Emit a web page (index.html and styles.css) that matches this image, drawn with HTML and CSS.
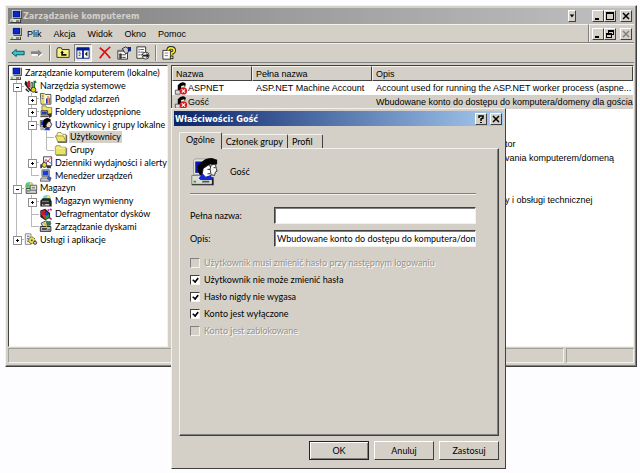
FILE: index.html
```html
<!DOCTYPE html>
<html lang="pl">
<head>
<meta charset="utf-8">
<title>Zarządzanie komputerem</title>
<link rel="stylesheet" href="styles.css">
</head>
<body>
<svg class="sprite" aria-hidden="true">
  <symbol id="pc" viewBox="0 0 16 16"><path d="M3 0h11l1 1v9H3z" fill="#d4d0c8"/><path d="M3 0h11v1H4v9H3z" fill="#eee"/><path d="M4 1h9v8H4z" fill="#001878"/><path d="M5 2h7v6H5z" fill="#0828c8"/><path d="M14 1h1v10H5v-1h9z" fill="#222"/><path d="M1 11h12v4H1z" fill="#deded8"/><path d="M1 15h13v1H1zM13 12h1v4h-1zM8 13h4v1H8z" fill="#222"/><path d="M2 13h2v1H2z" fill="#0a0"/></symbol>
  <symbol id="tools" viewBox="0 0 16 16"><path d="M1 1l3 2v4l5 6-2 1-5-6-2-3z" fill="#222"/><path d="M4 1h3v8H4z" fill="#d02020"/><path d="M8 3h2v7H8z" fill="#eee" stroke="#333"/><path d="M11 1h3l1 2-2 1v6h-2z" fill="#168030"/><circle cx="11" cy="12" r="3" fill="#e0d020" stroke="#222"/><path d="M2 10l4 4-1 1-4-3zM13 14h3v2h-3z" fill="#222"/></symbol>
  <symbol id="log" viewBox="0 0 16 16"><path d="M1 2h5l1 1h7v12H2z" fill="#fff8d0" stroke="#333"/><path d="M2 3l4-1v12l-4-1z" fill="#e8d860"/><path d="M8 8h2v6H8z" fill="#2038c0"/><path d="M10 5h1v9h-1z" fill="#c02020"/><path d="M12 7h1v7h-1z" fill="#187830"/><path d="M3 5h2M3 8h2" stroke="#555"/></symbol>
  <symbol id="share" viewBox="0 0 16 16"><path d="M3 1h5l1 2h6v8H3z" fill="#f0e060" stroke="#777"/><path d="M2 7h8v5H2z" fill="#ddd" stroke="#222"/><path d="M3 8h6v3H3z" fill="#1838b0"/><path d="M1 13h10v2H1z" fill="#555"/><path d="M10 11l5-1v4l-3 2z" fill="#333"/></symbol>
  <symbol id="users" viewBox="0 0 16 16"><path d="M1 3h7v8H1z" fill="#ddd" stroke="#444"/><path d="M2 4h5v5H2z" fill="#0828a0"/><path d="M5 2q5-4 9 0l-1 3-4 2-2 6-3-2z" fill="#000"/><path d="M10 5l3-1 2 4-2 4H9L8 9z" fill="#eed8c8" stroke="#111"/><path d="M6 14l3-3 3 1 1 3H6z" fill="#1838b0"/><path d="M1 12h5v3H1z" fill="#aaa"/></symbol>
  <symbol id="folder" viewBox="0 0 16 16"><path d="M1 4l1-2h5l1 2h6v9H1z" fill="#e9e263" stroke="#9a963e"/><path d="M2 5h11" stroke="#fffbd0"/><path d="M15 5v9H2" fill="none" stroke="#555"/></symbol>
  <symbol id="openfolder" viewBox="0 0 16 16"><path d="M3 4l1-2h4l2 2h4v9H4z" fill="#fffbc8" stroke="#888238"/><path d="M1 6h10l3 7H4z" fill="#eee46c" stroke="#8c863c"/><path d="M15 5v9H4" fill="none" stroke="#333"/></symbol>
  <symbol id="perf" viewBox="0 0 16 16"><path d="M5 1h10v11H5z" fill="#fff" stroke="#223"/><path d="M6 8l2-4 2 3 4-5" stroke="#d02020" fill="none"/><path d="M7 10l3-4 4 3" stroke="#2030c8" fill="none"/><circle cx="6" cy="11" r="3" fill="#e4d840" stroke="#222"/><path d="M1 10h2v5H1zM9 12h5v3H9z" fill="#333"/></symbol>
  <symbol id="device" viewBox="0 0 16 16"><path d="M3 1h9v8H3z" fill="#d8d8d8" stroke="#555"/><path d="M4 2h7v6H4z" fill="#1840c8"/><path d="M2 11h9l2 4H1z" fill="#c8ccd4" stroke="#555"/><path d="M11 8l4 3-2 4-4-3z" fill="#3858a8"/></symbol>
  <symbol id="storage" viewBox="0 0 16 16"><circle cx="6" cy="5" r="5" fill="#58c8c0"/><path d="M6 5l1-5 4 4z" fill="#f0e050"/><path d="M6 5L1 7l2-6z" fill="#60c040"/><path d="M2 8h12l1 6H2z" fill="#d4d4cc" stroke="#333"/><path d="M7 4h8v6H7z" fill="#e8e8e0" stroke="#444"/><path d="M9 6h4v2H9z" fill="#888"/><path d="M3 11h4" stroke="#070"/></symbol>
  <symbol id="removable" viewBox="0 0 16 16"><circle cx="9" cy="5" r="5" fill="#70d8c8"/><path d="M9 5l1-5 4 4z" fill="#f4ec60"/><path d="M1 7l3-3h9l2 4v6H1z" fill="#222"/><path d="M3 7h8l1 2H3z" fill="#777"/><path d="M3 11h9v2H3z" fill="#ccc"/><path d="M4 12h3" stroke="#111"/></symbol>
  <symbol id="defrag" viewBox="0 0 16 16"><path d="M1 3l6-2 6 5v6l-6 3-6-4z" fill="#222"/><path d="M2 4l5-2v6L2 9z" fill="#d01830"/><path d="M7 3l5 4-5 3z" fill="#2038d0"/><path d="M3 9l4-1 4 3-4 3z" fill="#e03030"/><path d="M8 10l4-3v4l-4 3z" fill="#20a040"/><path d="M10 2l2 1M13 1l2 2M12 12l3 2" stroke="#c020a0" stroke-width="2"/></symbol>
  <symbol id="disk" viewBox="0 0 16 16"><path d="M2 4l6-3 6 3-2 4H4z" fill="#ddd" stroke="#222"/><path d="M8 2l6-1-1 5-4 2z" fill="#307850"/><path d="M1 8h13v6H1z" fill="#bbb" stroke="#111"/><path d="M3 10h6v2H3z" fill="#333"/><path d="M5 3l4 5" stroke="#d8c030" stroke-width="2"/><path d="M10 12h3" stroke="#070"/></symbol>
  <symbol id="services" viewBox="0 0 16 16"><path d="M1 1h7v13H1z" fill="#f4f4ec" stroke="#777"/><path d="M3 4h3M3 7h3M3 10h3" stroke="#2038a0"/><circle cx="9" cy="9" r="4" fill="#e8de40" stroke="#333" stroke-dasharray="2 1"/><circle cx="9" cy="9" r="1" fill="#222"/><circle cx="13" cy="12" r="2" fill="#c8c8c8" stroke="#222"/></symbol>
  <symbol id="userx" viewBox="0 0 16 16"><path d="M4 4q5-6 10-2l-1 4-4 1-3 5-2-1z" fill="#000"/><path d="M8 5l4-1 1 4-4 3z" fill="#eee"/><path d="M1 10h6v5H1z" fill="#ddd" stroke="#444"/><circle cx="11" cy="11" r="4.5" fill="#e01818"/><path d="M9 9l4 4M13 9l-4 4" stroke="#fff" stroke-width="1.5"/></symbol>
</svg>

<main class="window">
  <header class="titlebar">
    <svg class="icon"><use href="#pc"/></svg>
    <h1>Zarządzanie komputerem</h1>
    <button class="cap thin" aria-label="Opcje"><svg viewBox="0 0 8 8"><path d="M1 2h6L4 6z"/></svg></button>
    <span class="capgroup">
      <button class="cap" aria-label="Minimalizuj"><svg viewBox="0 0 8 8"><path d="M1 6h4v2H1z"/></svg></button>
      <button class="cap" aria-label="Maksymalizuj"><svg viewBox="0 0 8 8"><path d="M0 0h8v8H0zM1 2v5h6V2z" fill-rule="evenodd"/></svg></button>
    </span>
    <button class="cap" aria-label="Zamknij"><svg viewBox="0 0 8 8"><path d="M1 1l6 6M7 1L1 7" class="x"/></svg></button>
  </header>
  <div class="menurow">
    <nav class="menubar">
      <svg class="icon"><use href="#pc"/></svg>
      <button>Plik</button><button>Akcja</button><button>Widok</button><button>Okno</button><button>Pomoc</button>
    </nav>
    <div class="mdi">
      <button class="cap" aria-label="Minimalizuj okno"><svg viewBox="0 0 8 8"><path d="M1 6h4v2H1z"/></svg></button>
      <button class="cap" aria-label="Przywróć okno"><svg viewBox="0 0 8 8"><path d="M2 0h6v5H6v3H0V3h2zM3 2v1h3v1h1V2zM1 5v2h4V5z" fill-rule="evenodd"/></svg></button>
      <button class="cap" aria-label="Zamknij okno" disabled><svg viewBox="0 0 8 8"><path d="M1 1l6 6M7 1L1 7" class="x"/></svg></button>
    </div>
  </div>
  <div class="toolbar">
    <button aria-label="Wstecz"><svg class="tool" viewBox="0 0 16 16"><path d="M1 8l5-4v2h9v4H6v2z" fill="#30c8d0" stroke="#084850"/></svg></button>
    <button aria-label="Dalej"><svg class="tool" viewBox="0 0 16 16"><path d="M15 9l-5 4v-2H2V8h8V5z" fill="#fff"/><path d="M14 8l-5-4v2H1v3h8v3z" fill="#858585"/></svg></button>
    <span class="sep"></span>
    <button aria-label="W górę"><svg class="tool" viewBox="0 0 16 16"><path d="M1 13V4l1-2h4l1 2h8v9z" fill="#f8f080" stroke="#222"/><path d="M5 8l2-3 2 3zM6 7h2v2h4v2H6z" fill="#111"/></svg></button>
    <button class="pressed" aria-label="Pokaż drzewo" aria-pressed="true"><svg class="tool" viewBox="0 0 16 16"><path d="M1 2h14v12H1z" fill="#fff" stroke="#001870"/><path d="M1 2h14v3H1zM7 5h2v9H7z" fill="#001890"/><path d="M3 7h2M3 9h3M3 11h2" stroke="#333"/><path d="M10 9l3-3v6z" fill="#222"/></svg></button>
    <button class="after" aria-label="Usuń"><svg class="tool" viewBox="0 0 16 16"><path d="M2 2q6 4 12 12M14 1Q7 6 2 14" fill="none" stroke="#e01010" stroke-width="2"/></svg></button>
    <button aria-label="Właściwości"><svg class="tool" viewBox="0 0 16 16"><path d="M1 5h11v10H1z" fill="#fff" stroke="#222"/><path d="M1 5h11v2H1z" fill="#888"/><path d="M3 9h2v2H3zM3 12h2v2H3zM6 10h4M6 13h4" fill="#333" stroke="#333"/><path d="M6 3l4-2 3 2v4l-3 2-2-3z" fill="#ccc" stroke="#222"/><path d="M12 1h4v5h-3z" fill="#102880"/></svg></button>
    <button aria-label="Eksportuj listę"><svg class="tool" viewBox="0 0 16 16"><path d="M1 1h10v13H1z" fill="#fff" stroke="#222"/><path d="M3 4h1M3 7h1M3 10h1" stroke="#444" stroke-width="2"/><path d="M5 4h4M5 7h4M5 10h3" stroke="#444"/><circle cx="11" cy="11" r="4" fill="#eee" stroke="#333"/><path d="M8 10h4V8l3 3-3 3v-2H8z" fill="#222"/></svg></button>
    <span class="sep"></span>
    <button aria-label="Pomoc"><svg class="tool" viewBox="0 0 16 16"><path d="M1 5h9v10H1z" fill="#fff" stroke="#222"/><path d="M3 8h4M3 11h4" stroke="#777"/><path d="M7 5q0-3 3-3 4 0 4 3 0 2-3 3v2" fill="none" stroke="#222" stroke-width="4"/><path d="M7 5q0-3 3-3 4 0 4 3 0 2-3 3v2" fill="none" stroke="#f4ec20" stroke-width="2"/><path d="M9 11h4v4H9z" fill="#222"/><path d="M10 12h2v2h-2z" fill="#f4ec20"/></svg></button>
  </div>

  <div class="panes">
    <ul class="tree">
      <li><svg class="icon"><use href="#pc"/></svg><span>Zarządzanie komputerem (lokalne)</span></li>
      <li><i class="g tee minus"></i><svg class="icon"><use href="#tools"/></svg><span>Narzędzia systemowe</span></li>
      <li><i class="g bar"></i><i class="g tee plus"></i><svg class="icon"><use href="#log"/></svg><span>Podgląd zdarzeń</span></li>
      <li><i class="g bar"></i><i class="g tee plus"></i><svg class="icon"><use href="#share"/></svg><span>Foldery udostępnione</span></li>
      <li><i class="g bar"></i><i class="g tee minus"></i><svg class="icon"><use href="#users"/></svg><span>Użytkownicy i grupy lokalne</span></li>
      <li><i class="g bar"></i><i class="g bar"></i><i class="g tee"></i><svg class="icon"><use href="#openfolder"/></svg><span class="selected">Użytkownicy</span></li>
      <li><i class="g bar"></i><i class="g bar"></i><i class="g ell"></i><svg class="icon"><use href="#folder"/></svg><span>Grupy</span></li>
      <li><i class="g bar"></i><i class="g tee plus"></i><svg class="icon"><use href="#perf"/></svg><span>Dzienniki wydajności i alerty</span></li>
      <li><i class="g bar"></i><i class="g ell"></i><svg class="icon"><use href="#device"/></svg><span>Menedżer urządzeń</span></li>
      <li><i class="g tee minus"></i><svg class="icon"><use href="#storage"/></svg><span>Magazyn</span></li>
      <li><i class="g bar"></i><i class="g tee plus"></i><svg class="icon"><use href="#removable"/></svg><span>Magazyn wymienny</span></li>
      <li><i class="g bar"></i><i class="g tee"></i><svg class="icon"><use href="#defrag"/></svg><span>Defragmentator dysków</span></li>
      <li><i class="g bar"></i><i class="g ell"></i><svg class="icon"><use href="#disk"/></svg><span>Zarządzanie dyskami</span></li>
      <li><i class="g ell plus"></i><svg class="icon"><use href="#services"/></svg><span>Usługi i aplikacje</span></li>
    </ul>
    <div class="list">
      <table>
        <colgroup><col class="c-name"><col class="c-full"><col></colgroup>
        <thead><tr><th>Nazwa</th><th>Pełna nazwa</th><th>Opis</th></tr></thead>
        <tbody>
          <tr><td class="name"><svg class="icon"><use href="#userx"/></svg>ASPNET</td><td>ASP.NET Machine Account</td><td>Account used for running the ASP.NET worker process (aspne...</td></tr>
          <tr class="current"><td class="name"><svg class="icon"><use href="#userx"/></svg>Gość</td><td></td><td>Wbudowane konto do dostępu do komputera/domeny dla gościa</td></tr>
          <tr><td colspan="3"></td></tr>
          <tr><td colspan="3"></td></tr>
          <tr><td></td><td></td><td class="behind">tor</td></tr>
          <tr><td></td><td></td><td class="behind">vania komputerem/domeną</td></tr>
          <tr><td colspan="3"></td></tr>
          <tr><td colspan="3"></td></tr>
          <tr><td></td><td></td><td class="behind">y i obsługi technicznej</td></tr>
        </tbody>
      </table>
    </div>
  </div>
  <footer class="status"><span></span><span></span></footer>
</main>

<section class="dialog" role="dialog" aria-labelledby="dlg-title">
  <header class="dlg-title">
    <h2 id="dlg-title">Właściwości: Gość</h2>
    <button class="cap" aria-label="Pomoc kontekstowa"><svg viewBox="0 0 8 8"><path d="M2 3V1h4v2L4 4v2" class="q"/><path d="M3 7h2v1H3z"/></svg></button>
    <button class="cap" aria-label="Zamknij"><svg viewBox="0 0 8 8"><path d="M1 1l6 6M7 1L1 7" class="x"/></svg></button>
  </header>
  <form class="dlg-body">
    <div class="tabs" role="tablist">
      <button type="button" role="tab" aria-selected="true">Ogólne</button>
      <button type="button" role="tab">Członek grupy</button>
      <button type="button" role="tab">Profil</button>
    </div>
    <div class="panel">
      <div class="who">
        <svg class="bigicon" viewBox="0 0 32 32"><path d="M4 3l2-2h13v18H4z" fill="#e4e4de" stroke="#999"/><path d="M6 4h11v13H6z" fill="#0818a8"/><path d="M2 20h20l4 3v7H2z" fill="#dcdcd4" stroke="#777"/><path d="M2 30h25v1H2zM25 22h2v8h-2z" fill="#222"/><path d="M14 26h8v2h-8z" fill="#555"/><path d="M4 26h3v2H4z" fill="#10b030"/><path d="M9 12q-1-4 4-7 4-5 12-5l6 2v5l-5 1-3-1-5 5-2 9-5-2-2-4z" fill="#050505"/><path d="M15 12l6-4 4 3 1 4-2 5-6 2-4-4z" fill="#fff" stroke="#111"/><path d="M24 8l5-1 1 5 1 3-2 1-1 4-4-1-1-6z" fill="#f4f4f4" stroke="#222"/><path d="M10 23l4-5 4 4 5-2 3 3-1 2H12z" fill="#1028d8"/><path d="M20 13h3M27 11h2M20 18h3" stroke="#111"/></svg>
        <span>Gość</span>
      </div>
      <hr>
      <div class="field"><label for="full">Pełna nazwa:</label><input id="full" type="text"></div>
      <div class="field"><label for="desc">Opis:</label><input id="desc" type="text" value="Wbudowane konto do dostępu do komputera/domeny dla gościa"></div>
      <div class="checks">
        <label class="off"><input type="checkbox" disabled>Użytkownik musi zmienić hasło przy następnym logowaniu</label>
        <label><input type="checkbox" checked>Użytkownik nie może zmienić hasła</label>
        <label><input type="checkbox" checked>Hasło nigdy nie wygasa</label>
        <label><input type="checkbox" checked>Konto jest wyłączone</label>
        <label class="off"><input type="checkbox" disabled>Konto jest zablokowane</label>
      </div>
    </div>
    <div class="actions">
      <button type="button" class="default">OK</button>
      <button type="button">Anuluj</button>
      <button type="button">Zastosuj</button>
    </div>
  </form>
</section>
</body>
</html>
```

FILE: styles.css
```css
* { box-sizing: border-box; }
:root {
  --face: #d4d0c8;
  --dark: #404040;
  --mid: #808080;
  --light: #f4f2ec;
  --title: "DejaVu Sans Condensed", "DejaVu Sans", sans-serif;
  --list: "Liberation Sans", Arial, sans-serif;
  --ui: Lato, "Liberation Sans", sans-serif;
}
body {
  margin: 0;
  padding: 5px 3px 0 5px;
  min-height: 100vh;
  background: #fdfdff;
  color: #000;
  font: 9px/12px var(--ui);
}
h1, h2 { margin: 0; font: bold 9px/12px var(--title); white-space: nowrap; }
button { padding: 0; border: 0; background: none; font: inherit; color: inherit; }
.sprite { position: absolute; width: 0; height: 0; }
.icon { width: 14px; height: 13px; flex: none; }

.window {
  padding: 2px;
  background: var(--face);
  border: 1px solid;
  border-color: var(--light) var(--dark) var(--dark) var(--light);
  box-shadow: inset -1px -1px var(--mid);
}
.titlebar {
  display: flex;
  align-items: center;
  height: 16px;
  padding: 0 2px 0 1px;
  background: linear-gradient(90deg, #808080, #c0c0c0);
  color: var(--face);
}
.titlebar h1 { flex: 1; }
.cap {
  display: grid;
  place-items: center;
  width: 12px;
  height: 12px;
  background: var(--face);
  color: #000;
  border: 1px solid;
  border-color: #fff var(--dark) var(--dark) #fff;
}
.cap svg { width: 8px; height: 8px; fill: currentColor; }
.cap.thin { width: 8px; margin-right: 16px; }
.cap.thin svg { width: 6px; height: 6px; }
.cap .x, .cap .q { fill: none; stroke: currentColor; stroke-width: 1.5; }
.cap:disabled { color: var(--mid); }
.capgroup { display: flex; margin-right: 4px; }

.menurow { display: flex; height: 19px; border-bottom: 1px solid var(--mid); }
.menubar { display: flex; flex: 1; align-items: center; padding-left: 1px; border-top: 1px solid var(--light); border-right: 1px solid var(--mid); font-family: var(--list); }
.menubar button { margin: 0 8px 0 4px; }
.mdi { display: flex; align-items: center; padding: 0 2px; border-top: 1px solid var(--light); border-left: 1px solid var(--light); }
.mdi .cap:last-child { margin-left: 4px; }

.toolbar {
  display: flex;
  align-items: center;
  gap: 5px;
  height: 20px;
  padding-left: 3px;
  border-top: 1px solid var(--light);
  border-bottom: 1px solid var(--mid);
}
.tool { display: block; width: 14px; height: 14px; }
.sep { width: 2px; height: 16px; border-left: 1px solid var(--mid); border-right: 1px solid var(--light); }
.pressed { padding: 1px; background: #e8e6e0; border: 1px solid; border-color: var(--mid) #fff #fff var(--mid); }
.toolbar .after { margin-left: 1px; }
.toolbar .pressed { margin-left: -1px; }

.panes { display: flex; gap: 3px; height: 284px; padding-top: 2px; }
.tree {
  display: grid;
  grid-auto-rows: 1fr;
  align-content: start;
  width: 160px;
  margin: 0;
  padding: 1px 0 100px;
  list-style: none;
  background: #fff;
  border: 1px solid;
  border-color: var(--dark) var(--light) var(--light) var(--dark);
}
.tree li { display: flex; align-items: center; white-space: nowrap; min-height: 0; }
.tree span { margin-left: 1px; padding: 0 1px; }
.tree .selected { background: var(--face); }
.g { position: relative; align-self: stretch; width: 15px; flex: none; }
.g::before { content: ""; position: absolute; left: 7px; top: 0; bottom: 0; border-left: 1px solid #b8b8b8; }
.g.ell::before { bottom: 50%; }
.tee, .ell { background: linear-gradient(#b8b8b8, #b8b8b8) right 50% / 7px 1px no-repeat; }
.plus::after, .minus::after {
  content: "";
  position: absolute;
  left: 4px;
  top: 3px;
  width: 7px;
  height: 7px;
  border: 1px solid #909090;
  background: linear-gradient(#000, #000) center / 3px 1px no-repeat, #fff;
}
.plus::after { background: linear-gradient(#000, #000) center / 3px 1px no-repeat, linear-gradient(#000, #000) center / 1px 3px no-repeat, #fff; }

.list { flex: 1; min-width: 0; background: #fff; border: 1px solid; border-color: var(--dark) var(--light) var(--light) var(--dark); font-family: var(--list); }
table { width: 100%; table-layout: fixed; border-collapse: separate; border-spacing: 0; }
.c-name { width: 80px; }
.c-full { width: 120px; }
th, td { height: 14px; padding: 0 0 0 3px; text-align: left; font-weight: normal; white-space: nowrap; overflow: hidden; line-height: 12px; }
th { height: 15px; background: var(--face); border: 1px solid; border-color: var(--light) var(--dark) var(--dark) var(--light); }
td { padding-left: 4px; }
.name .icon { margin-left: -2px; vertical-align: top; }
.current td { background: var(--face); }
td.behind { padding-left: 133px; }

.status { display: flex; gap: 2px; height: 17px; padding: 1px 0; }
.status span { flex: 1; border: 1px solid; border-color: #a0a09a var(--light) var(--light) #a0a09a; }
.status span:last-child { flex: 0 0 68px; }

.dialog {
  position: absolute;
  left: 171px;
  top: 108px;
  width: 335px;
  padding: 2px;
  background: var(--face);
  border: 1px solid;
  border-color: var(--light) var(--dark) var(--dark) var(--light);
}
.dlg-title {
  display: flex;
  align-items: center;
  gap: 3px;
  height: 15px;
  padding: 0 1px;
  background: linear-gradient(90deg, #0a246a, #a6caf0);
  color: #fff;
}
.dlg-title h2 { flex: 1; }
.dlg-body { padding: 6px 4px 6px 5px; }
.tabs { display: flex; align-items: flex-end; }
.tabs button { height: 14px; padding: 0 4px; border-top: 1px solid var(--light); border-right: 1px solid var(--dark); border-radius: 2px 2px 0 0; }
.tabs button[aria-selected] { height: 17px; padding: 0 6px 2px; margin-bottom: -1px; background: var(--face); border-left: 1px solid var(--light); z-index: 1; }
.tabs button:last-child { padding-right: 9px; }
.panel { height: 288px; padding: 9px 22px 0 10px; border: 1px solid; border-color: var(--light) var(--dark) var(--dark) var(--light); box-shadow: inset -1px -1px var(--mid); }
.who { display: flex; align-items: center; gap: 12px; }
.bigicon { width: 28px; height: 28px; }
hr { margin: 7px 0 12px; border: 0; border-top: 1px solid var(--mid); border-bottom: 1px solid var(--light); }
.field { display: flex; align-items: center; margin-bottom: 6px; }
.field label { width: 84px; }
.field input {
  flex: 1;
  min-width: 0;
  height: 17px;
  padding: 0 0 0 2px;
  border: 1px solid;
  border-color: var(--dark) var(--light) var(--light) var(--dark);
  box-shadow: inset 1px 1px var(--mid);
  background: #fff;
  font: inherit;
}
.checks { display: grid; gap: 5px; margin-top: 10px; }
.checks label { display: flex; align-items: center; gap: 4px; }
.checks input {
  appearance: none;
  width: 10px;
  height: 10px;
  margin: 0;
  background: #fff;
  border: 1px solid;
  border-color: var(--dark) var(--light) var(--light) var(--dark);
}
.checks input:checked::before { content: ""; display: block; width: 3px; height: 5px; margin: 0 auto; border: solid #000; border-width: 0 2px 2px 0; box-sizing: content-box; transform: rotate(40deg) scale(0.8); }
.checks input:disabled { background: var(--face); border-color: var(--mid) var(--light) var(--light) var(--mid); }
.off { color: #96938c; text-shadow: 1px 1px #fff; }
.actions { display: flex; justify-content: flex-end; gap: 5px; margin-top: 5px; }
.actions button { width: 60px; height: 19px; border: 1px solid; border-color: #fff var(--dark) var(--dark) #fff; }
.actions .default { border-color: #222; box-shadow: inset 1px 1px #fff, inset -1px -1px var(--mid); }
```
